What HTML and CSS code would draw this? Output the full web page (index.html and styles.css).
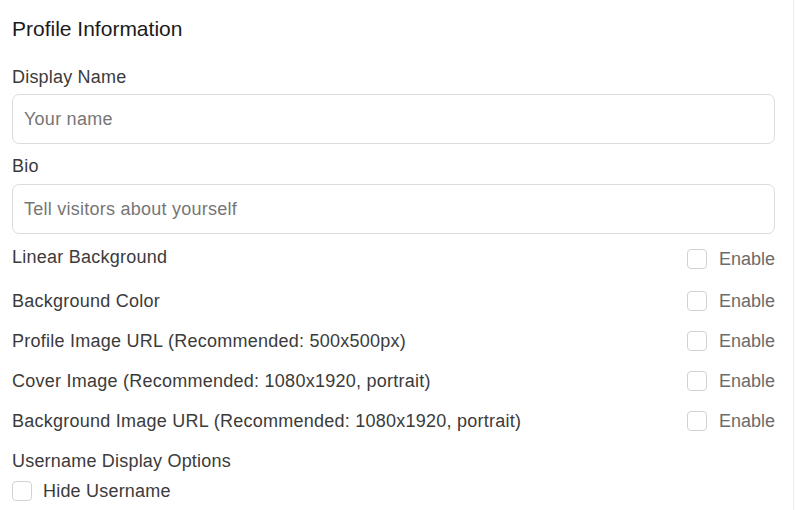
FILE: index.html
```html
<!DOCTYPE html>
<html lang="en">
<head>
<meta charset="utf-8">
<title>Profile Information</title>
<link rel="stylesheet" href="styles.css">
</head>
<body>
<section class="panel">
  <h2 class="title">Profile Information</h2>

  <label class="label first">Display Name</label>
  <div class="input"><input type="text" placeholder="Your name"></div>

  <label class="label">Bio</label>
  <div class="input bio"><input type="text" placeholder="Tell visitors about yourself"></div>

  <div class="row row-first">
    <span class="row-label top">Linear Background</span>
    <label class="toggle"><span class="box"></span><span class="toggle-text">Enable</span></label>
  </div>
  <div class="row">
    <span class="row-label">Background Color</span>
    <label class="toggle"><span class="box"></span><span class="toggle-text">Enable</span></label>
  </div>
  <div class="row">
    <span class="row-label">Profile Image URL (Recommended: 500x500px)</span>
    <label class="toggle"><span class="box"></span><span class="toggle-text">Enable</span></label>
  </div>
  <div class="row">
    <span class="row-label">Cover Image (Recommended: 1080x1920, portrait)</span>
    <label class="toggle"><span class="box"></span><span class="toggle-text">Enable</span></label>
  </div>
  <div class="row">
    <span class="row-label">Background Image URL (Recommended: 1080x1920, portrait)</span>
    <label class="toggle"><span class="box"></span><span class="toggle-text">Enable</span></label>
  </div>

  <div class="label options">Username Display Options</div>
  <label class="check"><span class="box"></span><span class="check-text">Hide Username</span></label>
</section>
</body>
</html>
```
FILE: styles.css
```css
html, body {
  margin: 0;
  padding: 0;
  background: #ffffff;
}
body {
  font-family: "Liberation Sans", Arial, sans-serif;
  color: #3b3b3b;
}
.panel {
  width: 794px;
  height: 510px;
  box-sizing: border-box;
  border-right: 1px solid #ececec;
  padding: 17px 18px 0 12px;
  display: flex;
  flex-direction: column;
}
.title {
  margin: 0;
  font-size: 21px;
  font-weight: 400;
  line-height: 24px;
  color: #1a1a1a;
}
.label {
  display: block;
  font-size: 18px;
  letter-spacing: 0.2px;
  line-height: 24px;
  color: #3b3b3b;
  margin-top: 10px;
}
.label.first {
  margin-top: 24px;
}
.input {
  margin-top: 5px;
  height: 50px;
  box-sizing: border-box;
  border: 1px solid #dcdcdc;
  border-radius: 7px;
  display: flex;
  align-items: center;
  padding: 0 11px;
}
.input.bio {
  margin-top: 6px;
}
.input input {
  border: 0;
  outline: none;
  width: 100%;
  padding: 0;
  font-family: inherit;
  font-size: 18px;
  letter-spacing: 0.25px;
  color: #333;
  background: transparent;
}
.input input::placeholder {
  color: #767676;
}
.row {
  height: 40px;
  display: flex;
  align-items: center;
  justify-content: space-between;
}
.row-first {
  height: 44px;
  margin-top: 3px;
}
.row-label {
  font-size: 18px;
  letter-spacing: 0.25px;
  line-height: 24px;
  color: #3b3b3b;
}
.row-label.top {
  align-self: flex-start;
  margin-top: 8px;
}
.toggle, .check {
  display: flex;
  align-items: center;
  gap: 12px;
}
.box {
  width: 20px;
  height: 20px;
  box-sizing: border-box;
  border: 1px solid #d2d2d2;
  border-radius: 4px;
  background: #fff;
}
.toggle-text {
  font-size: 18px;
  line-height: 24px;
  color: #6b6b6b;
}
.label.options {
  margin-top: 8px;
}
.check {
  margin-top: 6px;
  gap: 11px;
}
.check-text {
  font-size: 18px;
  letter-spacing: 0.2px;
  line-height: 24px;
  color: #3b3b3b;
}
```
